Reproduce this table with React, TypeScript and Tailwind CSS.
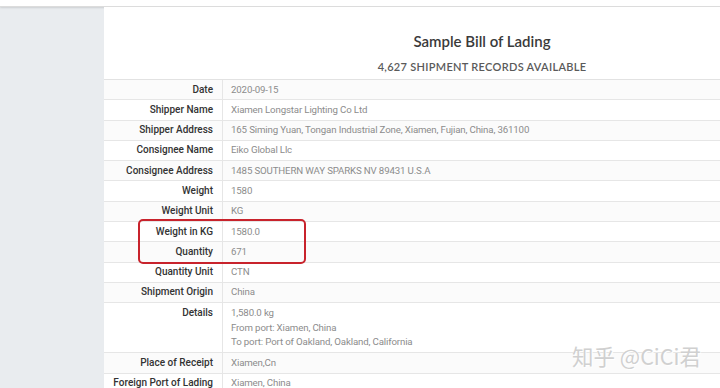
type Row = { label: string; value: string[] };

const rows: Row[] = [
  { label: "Date", value: ["2020-09-15"] },
  { label: "Shipper Name", value: ["Xiamen Longstar Lighting Co Ltd"] },
  {
    label: "Shipper Address",
    value: ["165 Siming Yuan, Tongan Industrial Zone, Xiamen, Fujian, China, 361100"],
  },
  { label: "Consignee Name", value: ["Eiko Global Llc"] },
  { label: "Consignee Address", value: ["1485 SOUTHERN WAY SPARKS NV 89431 U.S.A"] },
  { label: "Weight", value: ["1580"] },
  { label: "Weight Unit", value: ["KG"] },
  { label: "Weight in KG", value: ["1580.0"] },
  { label: "Quantity", value: ["671"] },
  { label: "Quantity Unit", value: ["CTN"] },
  { label: "Shipment Origin", value: ["China"] },
  {
    label: "Details",
    value: [
      "1,580.0 kg",
      "From port: Xiamen, China",
      "To port: Port of Oakland, Oakland, California",
    ],
  },
  { label: "Place of Receipt", value: ["Xiamen,Cn"] },
  { label: "Foreign Port of Lading", value: ["Xiamen, China"] },
];

export default function App() {
  return (
    <div className="relative w-[720px] h-[388px] overflow-hidden bg-[#e9ecef] font-['Roboto',sans-serif]">
      {/* top bar */}
      <div className="h-[7px] bg-white shadow-[0_1px_2px_rgba(0,0,0,0.12)] border-b border-[#dcdcdc]" />

      <div className="flex">
        <div className="w-[104px] shrink-0" />

        {/* record card */}
        <div className="w-[756px] shrink-0 bg-white">
          <div className="h-[73px] border-b border-[#e2e2e2] flex flex-col items-center pt-[25px] font-['Lato',sans-serif]">
            <h1 className="text-[15px] font-semibold text-[#3a3a3a] leading-[18px]">
              Sample Bill of Lading
            </h1>
            <p className="mt-[10px] text-[11px] font-semibold tracking-[0.3px] text-[#5a5a5a] leading-[14px]">
              4,627 SHIPMENT RECORDS AVAILABLE
            </p>
          </div>

          <div>
            {rows.map((r, i) => (
              <div
                key={r.label}
                className={`flex border-b border-[#e6e6e6] ${i % 2 === 0 ? "bg-[#fbfbfb]" : "bg-white"}`}
              >
                <div className="w-[119px] shrink-0 border-r border-[#e6e6e6] text-right pr-[9px] py-[3.65px] text-[10px] leading-[12px] font-medium text-[#333]">
                  {r.label}
                </div>
                <div className="pl-[8px] py-[3.65px] text-[9.7px] leading-[12px] tracking-[-0.15px] text-[#8c8c8c]">
                  {r.value.length > 1 ? (
                    <div className="flex flex-col gap-[2.5px] py-[0.5px]">
                      {r.value.map((v) => (
                        <span key={v}>{v}</span>
                      ))}
                    </div>
                  ) : (
                    r.value[0]
                  )}
                </div>
              </div>
            ))}
          </div>
        </div>
      </div>

      {/* highlight around weight / quantity */}
      <div className="absolute left-[138px] top-[219px] w-[168px] h-[45px] border-2 border-[#c8232c] rounded-[5px]" />

      {/* watermark */}
      <div className="absolute left-[572px] top-[343px] text-[21.5px] leading-[26px] text-[#d0d0d0] font-['Noto_Sans_CJK_SC',sans-serif] [text-shadow:0_0_1px_#fff,1px_1px_0_#fff]">
        知乎 @CiCi君
      </div>
    </div>
  );
}
